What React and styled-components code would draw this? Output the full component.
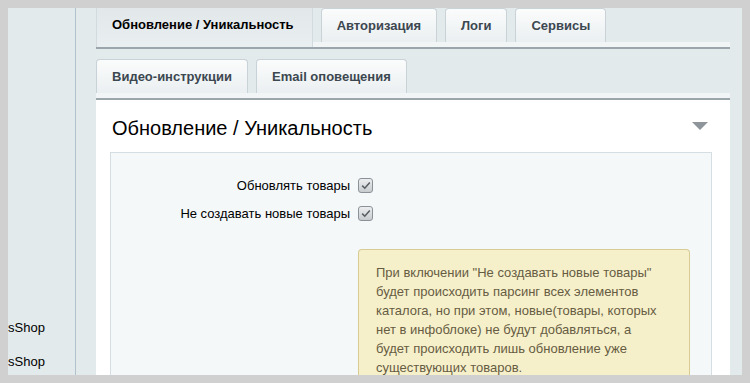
import * as React from "react";
import styled, { createGlobalStyle } from "styled-components";

const GlobalStyle = createGlobalStyle`
  html, body {
    margin: 0;
    padding: 0;
    background: #d0d0d0;
  }
  * {
    box-sizing: border-box;
  }
  body {
    font-family: "Liberation Sans", Arial, sans-serif;
    font-size: 13px;
  }
`;

const topTabs = [
  { title: "Обновление / Уникальность", active: true },
  { title: "Авторизация" },
  { title: "Логи" },
  { title: "Сервисы" },
];

const subTabs = [{ title: "Видео-инструкции" }, { title: "Email оповещения" }];

const options = ["Обновлять товары", "Не создавать новые товары"];

function Check() {
  return (
    <SCheck>
      <svg width="10" height="9" viewBox="0 0 10 9">
        <path
          d="M1.2 4.6 L3.8 7.2 L8.8 1.4"
          fill="none"
          stroke="#5a5f63"
          strokeWidth="1.6"
        />
      </svg>
    </SCheck>
  );
}

export default function App() {
  return (
    <>
      <GlobalStyle />
      <SFrame>
        <SSidebar>
          <SSideItem>sShop</SSideItem>
          <SSideItem>sShop</SSideItem>
        </SSidebar>
        <SMain>
          <STabRow>
            {topTabs.map((t) => (
              <STab key={t.title} $active={t.active}>
                {t.title}
              </STab>
            ))}
          </STabRow>
          <STabRow $second>
            {subTabs.map((t) => (
              <STab key={t.title}>{t.title}</STab>
            ))}
          </STabRow>
          <SPanel>
            <SPanelHead>
              <STitle>Обновление / Уникальность</STitle>
              <STriangle />
            </SPanelHead>
            <SBox>
              <SOptions>
                {options.map((o) => (
                  <React.Fragment key={o}>
                    <SLabel>{o}</SLabel>
                    <Check />
                  </React.Fragment>
                ))}
              </SOptions>
              <SNote>
                При включении "Не создавать новые товары"
                <br />
                будет происходить парсинг всех элементов
                <br />
                каталога, но при этом, новые(товары, которых
                <br />
                нет в инфоблоке) не будут добавляться, а
                <br />
                будет происходить лишь обновление уже
                <br />
                существующих товаров.
              </SNote>
            </SBox>
          </SPanel>
        </SMain>
      </SFrame>
    </>
  );
}

const SFrame = styled.div`
  width: 750px;
  height: 383px;
  border: 8px solid #d0d0d0;
  background: #e3eaec;
  display: flex;
  overflow: hidden;
`;

const SSidebar = styled.div`
  width: 68px;
  flex-shrink: 0;
  border-right: 1px solid #b2c2cc;
  display: flex;
  flex-direction: column;
  justify-content: flex-end;
  gap: 18px;
  padding-bottom: 5px;
  overflow: hidden;
`;

const SSideItem = styled.div`
  color: #000;
  font-size: 13px;
  line-height: 16px;
  white-space: nowrap;
`;

const SMain = styled.div`
  width: 634px;
  margin-left: 20px;
  display: flex;
  flex-direction: column;
`;

const STabRow = styled.div`
  display: flex;
  align-items: flex-end;
  gap: 8px;
  height: 41px;
  flex-shrink: 0;
  margin-top: ${(p) => (p.$second ? "10px" : "0")};
  border-bottom: 2px solid #9ba6ac;
  box-shadow: inset 0 -5px 0 #f1f5f6;
  padding-bottom: 5px;
`;

const STab = styled.div`
  height: ${(p) => (p.$active ? "39px" : "34px")};
  margin-bottom: ${(p) => (p.$active ? "-5px" : "0")};
  padding: ${(p) => (p.$active ? "0 19px 6px 16px" : "0 15px")};
  display: flex;
  align-items: center;
  font-size: 13px;
  font-weight: 700;
  white-space: nowrap;
  color: ${(p) => (p.$active ? "#000" : "#3c4750")};
  border: ${(p) => (p.$active ? "none" : "1px solid #c9d2d7")};
  border-bottom: none;
  border-radius: ${(p) => (p.$active ? "0" : "4px 4px 0 0")};
  background: ${(p) =>
    p.$active
      ? "linear-gradient(#e2e8ea, #e9eef0)"
      : "linear-gradient(#fbfcfc, #eaeff1)"};
  box-shadow: ${(p) =>
    p.$active ? "inset 1px 0 0 #d3dbdf, inset -1px 0 0 #d3dbdf" : "none"};
`;

const SPanel = styled.div`
  flex: 1;
  background: #fff;
  padding: 0 18px 0 14px;
  display: flex;
  flex-direction: column;
`;

const SPanelHead = styled.div`
  height: 52px;
  display: flex;
  align-items: center;
  justify-content: space-between;
  padding: 4px 2px 0 2px;
`;

const STitle = styled.h2`
  margin: 0;
  font-size: 20px;
  font-weight: 400;
  color: #000;
  line-height: 24px;
`;

const STriangle = styled.div`
  width: 0;
  height: 0;
  margin-right: 2px;
  margin-top: -4px;
  border-left: 8px solid transparent;
  border-right: 8px solid transparent;
  border-top: 8px solid #8e969b;
`;

const SBox = styled.div`
  flex: 1;
  border: 1px solid #d4dee3;
  border-bottom: none;
  background: #f4f8f9;
  padding: 18px 20px 0 0;
  display: flex;
  flex-direction: column;
`;

const SOptions = styled.div`
  display: grid;
  grid-template-columns: 239px 14px;
  grid-auto-rows: 28px;
  column-gap: 8px;
  align-items: center;
`;

const SLabel = styled.div`
  text-align: right;
  color: #000;
  font-size: 13px;
`;

const SCheck = styled.span`
  width: 15px;
  height: 15px;
  border: 1px solid #8b9297;
  border-radius: 3px;
  background: linear-gradient(#eceeef, #c8ccce);
  display: flex;
  align-items: center;
  justify-content: center;
`;

const SNote = styled.div`
  margin: 22px 0 0 247px;
  width: 332px;
  flex: 1;
  background: #f6f0ca;
  border: 1px solid #d8cb94;
  border-bottom: none;
  border-radius: 4px 4px 0 0;
  padding: 13px 16px 0 17px;
  color: #665c43;
  font-size: 13px;
  line-height: 19px;
`;
